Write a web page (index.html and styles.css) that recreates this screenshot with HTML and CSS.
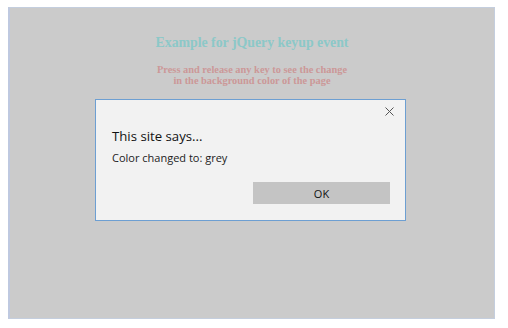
FILE: index.html
```html
<!DOCTYPE html>
<html>
<head>
  <title>jQuery keyup event</title>
  <link rel="stylesheet" href="styles.css">
</head>
<body>
  <div class="page">
    <h1>Example for jQuery keyup event</h1>
    <p class="info">Press and release any key to see the change<br>in the background color of the page</p>

    <!-- alert box shown over the page -->
    <div class="alert">
      <svg class="alert-close" width="9" height="9" viewBox="0 0 9 9">
        <path d="M0.5 0.5 L8.5 8.5 M8.5 0.5 L0.5 8.5" stroke="#555555" stroke-width="1" fill="none"/>
      </svg>
      <div class="alert-title">This site says...</div>
      <div class="alert-msg">Color changed to: grey</div>
      <div class="alert-buttons">
        <button class="ok">OK</button>
      </div>
    </div>
  </div>
</body>
</html>
```

FILE: styles.css
```css
body {
  margin: 0;
  background-color: #ffffff;
  font-family: "Liberation Serif", serif;
}

.page {
  position: relative;
  box-sizing: border-box;
  width: 487px;
  height: 312px;
  margin: 7px 0 0 8px;
  background-color: #cbcbcb;
  border: 1px solid #c4cede;
  border-left: 2px solid #bfc9e0;
  text-align: center;
  padding-top: 27px;
}

h1 {
  margin: 0;
  font-size: 13.8px;
  font-weight: bold;
  color: #8cc8c8;
}

.info {
  margin: 13px 0 0 0;
  font-size: 10.4px;
  line-height: 11px;
  font-weight: bold;
  color: #cc9898;
}

.alert {
  position: absolute;
  left: 85px;
  top: 91px;
  width: 311px;
  height: 122px;
  box-sizing: border-box;
  background-color: #f2f2f2;
  border: 1px solid #6d9fd2;
  text-align: left;
  font-family: "Open Sans", sans-serif;
  padding: 0 15px 0 16px;
}

.alert-close {
  position: absolute;
  right: 11px;
  top: 7px;
}

.alert-title {
  margin-top: 27px;
  font-size: 13.2px;
  color: #111111;
}

.alert-msg {
  margin-top: 5px;
  font-size: 11px;
  color: #222222;
}

.alert-buttons {
  display: flex;
  justify-content: flex-end;
  margin-top: 17px;
}

.ok {
  width: 137px;
  height: 22px;
  border: none;
  background-color: #c4c4c4;
  font-family: "Open Sans", sans-serif;
  font-size: 11px;
  color: #111111;
  padding: 0;
}
```
